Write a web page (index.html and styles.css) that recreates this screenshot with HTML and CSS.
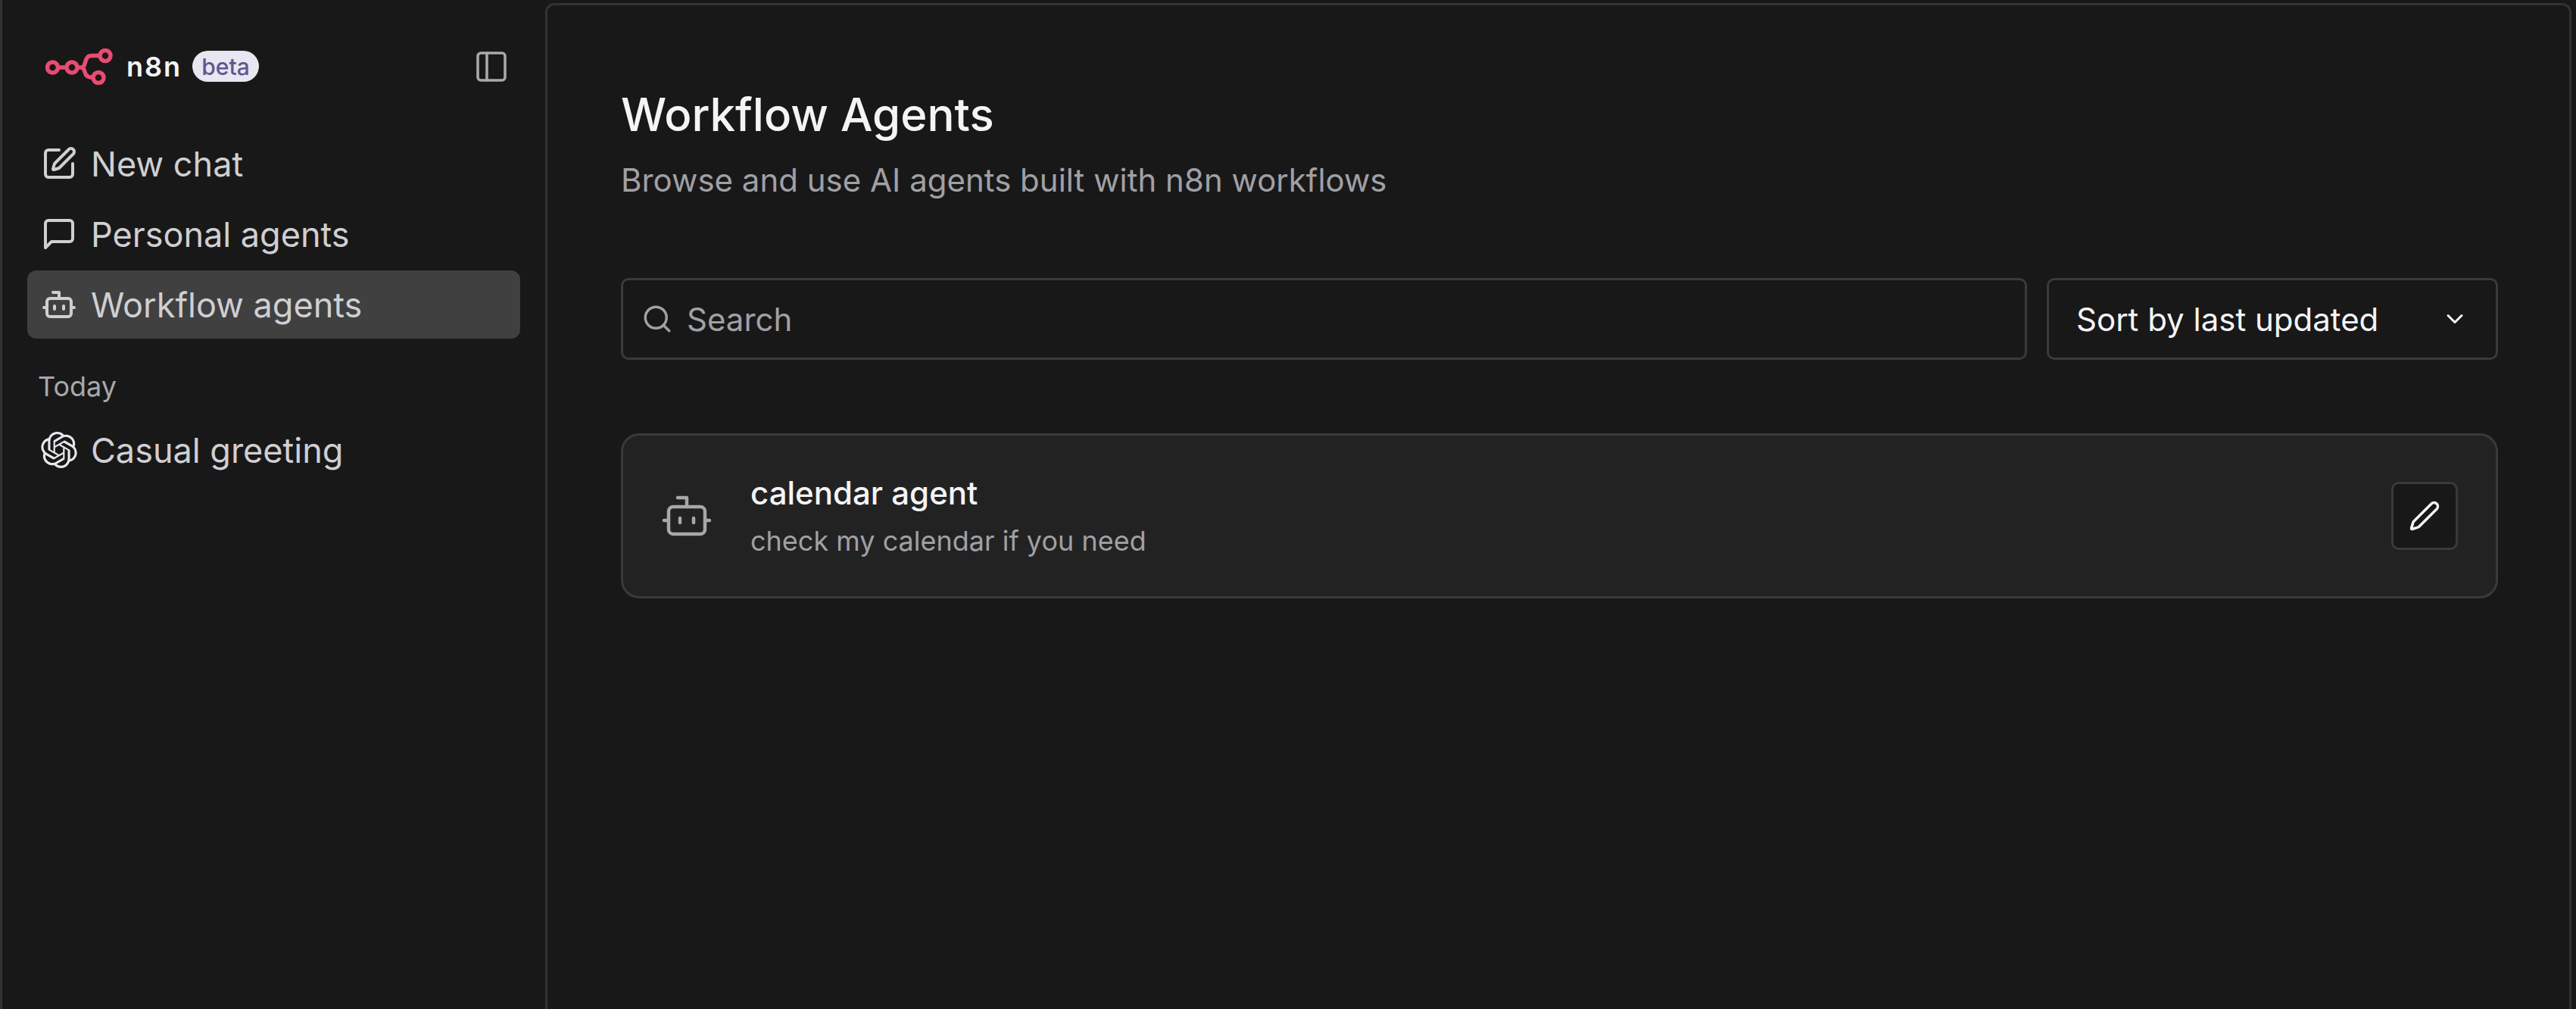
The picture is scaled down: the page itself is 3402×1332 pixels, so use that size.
FILE: index.html
```html
<!DOCTYPE html>
<html lang="en">
<head>
<meta charset="utf-8">
<title>Workflow Agents</title>
<link rel="stylesheet" href="styles.css">
</head>
<body>
<div class="app">
  <aside class="sidebar">
    <div class="brand">
      <div class="logo">
        <svg class="logo-mark" viewBox="0 0 91 48" fill="none" stroke="#ea4b71" stroke-width="5.5">
          <circle cx="9.5" cy="25" r="7"/>
          <circle cx="35" cy="25" r="7"/>
          <circle cx="79" cy="9.5" r="7"/>
          <circle cx="70" cy="38.5" r="7"/>
          <path d="M16.5 25H28M42 25H50M72 9.5H62C54 9.5 54 14 52 20C51 24 50 25 47 25C50 25 51 27 52 31C53 36 56 38.5 63 38.5"/>
        </svg>
        <span class="logo-name">n8n</span>
        <span class="badge">beta</span>
      </div>
      <svg class="panel-icon" viewBox="0 0 24 24" fill="none" stroke="currentColor" stroke-width="1.8" stroke-linecap="round" stroke-linejoin="round">
        <rect x="3" y="3" width="18" height="18" rx="2"/><path d="M9 3v18"/>
      </svg>
    </div>
    <nav class="nav">
      <a class="nav-item">
        <svg class="nav-icon" viewBox="0 0 24 24" fill="none" stroke="currentColor" stroke-width="2" stroke-linecap="round" stroke-linejoin="round">
          <path d="M12 3H5a2 2 0 0 0-2 2v14a2 2 0 0 0 2 2h14a2 2 0 0 0 2-2v-7"/>
          <path d="M18.375 2.625a1 1 0 0 1 3 3l-9.013 9.014a2 2 0 0 1-.853.505l-2.873.84a.5.5 0 0 1-.62-.62l.84-2.873a2 2 0 0 1 .506-.852z"/>
        </svg>
        <span>New chat</span>
      </a>
      <a class="nav-item">
        <svg class="nav-icon" viewBox="0 0 24 24" fill="none" stroke="currentColor" stroke-width="2" stroke-linecap="round" stroke-linejoin="round">
          <path d="M21 15a2 2 0 0 1-2 2H7l-4 4V5a2 2 0 0 1 2-2h14a2 2 0 0 1 2 2z"/>
        </svg>
        <span>Personal agents</span>
      </a>
      <a class="nav-item active">
        <svg class="nav-icon" viewBox="0 0 24 24" fill="none" stroke="currentColor" stroke-width="2" stroke-linecap="round" stroke-linejoin="round">
          <path d="M12 8V4H8"/><rect x="4" y="8" width="16" height="12" rx="2"/><path d="M2 14h2M20 14h2M15 13v2M9 13v2"/>
        </svg>
        <span>Workflow agents</span>
      </a>
    </nav>
    <div class="group-label">Today</div>
    <a class="nav-item">
      <svg class="nav-icon openai" viewBox="0 0 24 24" fill="#e8e8ec">
        <path d="M22.282 9.821a5.985 5.985 0 0 0-.516-4.91 6.046 6.046 0 0 0-6.51-2.9A6.065 6.065 0 0 0 4.981 4.18a5.985 5.985 0 0 0-3.998 2.9 6.046 6.046 0 0 0 .743 7.097 5.98 5.98 0 0 0 .51 4.911 6.051 6.051 0 0 0 6.515 2.9A5.985 5.985 0 0 0 13.26 24a6.056 6.056 0 0 0 5.772-4.206 5.99 5.99 0 0 0 3.997-2.9 6.056 6.056 0 0 0-.747-7.073zM13.26 22.43a4.476 4.476 0 0 1-2.876-1.04l.141-.081 4.779-2.758a.795.795 0 0 0 .392-.681v-6.737l2.02 1.168a.071.071 0 0 1 .038.052v5.583a4.504 4.504 0 0 1-4.494 4.494zM3.6 18.304a4.47 4.47 0 0 1-.535-3.014l.142.085 4.783 2.759a.771.771 0 0 0 .78 0l5.843-3.369v2.332a.08.08 0 0 1-.033.062L9.74 19.95a4.5 4.5 0 0 1-6.14-1.646zM2.34 7.896a4.485 4.485 0 0 1 2.366-1.973V11.6a.766.766 0 0 0 .388.676l5.815 3.355-2.02 1.168a.076.076 0 0 1-.071 0l-4.83-2.786A4.504 4.504 0 0 1 2.34 7.872zm16.597 3.855l-5.833-3.387L15.119 7.2a.076.076 0 0 1 .071 0l4.83 2.791a4.494 4.494 0 0 1-.676 8.105v-5.678a.79.79 0 0 0-.407-.667zm2.01-3.023l-.141-.085-4.774-2.782a.776.776 0 0 0-.785 0L9.409 9.23V6.897a.066.066 0 0 1 .028-.061l4.83-2.787a4.5 4.5 0 0 1 6.68 4.66zm-12.64 4.135l-2.02-1.164a.08.08 0 0 1-.038-.057V6.075a4.5 4.5 0 0 1 7.375-3.453l-.142.08L8.704 5.46a.795.795 0 0 0-.393.681zm1.097-2.365l2.602-1.5 2.607 1.5v2.999l-2.597 1.5-2.607-1.5z"/>
      </svg>
      <span>Casual greeting</span>
    </a>
  </aside>
  <main class="main">
    <h1 class="title">Workflow Agents</h1>
    <p class="subtitle">Browse and use AI agents built with n8n workflows</p>
    <div class="filters">
      <div class="search">
        <svg class="search-icon" viewBox="0 0 24 24" fill="none" stroke="currentColor" stroke-width="2" stroke-linecap="round" stroke-linejoin="round">
          <path d="m21 21-4.34-4.34"/><circle cx="11" cy="11" r="8"/>
        </svg>
        <span>Search</span>
      </div>
      <div class="sort">
        <span>Sort by last updated</span>
        <svg class="chevron" viewBox="0 0 24 24" fill="none" stroke="currentColor" stroke-width="2" stroke-linecap="round" stroke-linejoin="round">
          <path d="m6 9 6 6 6-6"/>
        </svg>
      </div>
    </div>
    <article class="card">
      <svg class="card-icon" viewBox="0 0 24 24" fill="none" stroke="currentColor" stroke-width="1.5" stroke-linecap="round" stroke-linejoin="round">
        <path d="M12 8V4H8"/><rect x="4" y="8" width="16" height="12" rx="2"/><path d="M2 14h2M20 14h2M15 13v2M9 13v2"/>
      </svg>
      <div class="card-body">
        <div class="card-title">calendar agent</div>
        <div class="card-desc">check my calendar if you need</div>
      </div>
      <button class="edit" type="button" aria-label="Edit">
        <svg class="edit-icon" viewBox="0 0 24 24" fill="none" stroke="currentColor" stroke-width="2" stroke-linecap="round" stroke-linejoin="round">
          <path d="M21.174 6.812a1 1 0 0 0-3.986-3.987L3.842 16.174a2 2 0 0 0-.5.83l-1.321 4.352a.5.5 0 0 0 .623.622l4.353-1.32a2 2 0 0 0 .83-.497z"/>
        </svg>
      </button>
    </article>
  </main>
</div>
</body>
</html>
```
FILE: styles.css
```css
* { box-sizing: border-box; }
html, body { margin: 0; height: 100%; }
body {
  background: #181818;
  color: #f4f4f6;
  font-family: Inter, "Liberation Sans", sans-serif;
  overflow: hidden;
}
.app {
  display: flex;
  height: 1332px;
  padding-top: 4px;
  border-left: 3px solid #333;
}
.sidebar {
  width: 717px;
  flex: none;
  padding: 0 33px;
  color: #cfcfd3;
}
.brand {
  display: flex;
  align-items: center;
  justify-content: space-between;
  padding: 60px 14px 0 24px;
  height: 107px;
}
.logo { display: flex; align-items: center; }
.logo-mark { width: 91px; height: 48px; display: block; }
.logo-name {
  margin-left: 16px;
  font-size: 36px;
  font-weight: 600;
  letter-spacing: 2px;
  color: #f4f4f6;
}
.badge {
  margin-left: 14px;
  width: 88px;
  height: 41px;
  border-radius: 21px;
  background: #e8e6f0;
  color: #5f5790;
  font-size: 30px;
  font-weight: 500;
  display: flex;
  align-items: center;
  justify-content: center;
}
.panel-icon { width: 48px; height: 48px; color: #a8a8ac; flex: none; }
.nav { display: flex; flex-direction: column; gap: 3px; margin-top: 60px; }
.nav-item {
  display: flex;
  align-items: center;
  gap: 18px;
  height: 90px;
  padding: 0 18px;
  border-radius: 12px;
  font-size: 45px;
  color: #cfcfd3;
}
.nav-item.active { background: #404040; }
.nav-icon { width: 48px; height: 48px; flex: none; }
.group-label {
  margin-top: 36px;
  padding-left: 14px;
  font-size: 36px;
  line-height: 54px;
  color: #a8a8ac;
}
.group-label + .nav-item { margin-top: 12px; }
.main {
  flex: 1;
  margin-right: 6px;
  border: 3px solid #333;
  border-bottom: 0;
  border-radius: 12px 12px 0 0;
  padding: 0 94px 0 97px;
}
.title {
  margin: 108px 0 0;
  font-size: 60px;
  line-height: 72px;
  font-weight: 500;
  color: #f4f4f6;
}
.subtitle {
  margin: 21px 0 0;
  font-size: 42px;
  line-height: 60px;
  color: #a0a0a5;
}
.filters { display: flex; gap: 26px; margin-top: 99px; }
.search, .sort {
  height: 108px;
  border: 3px solid #3a3a3a;
  border-radius: 10px;
  display: flex;
  align-items: center;
  font-size: 42px;
}
.search { flex: 1; padding: 0 24px; gap: 18px; color: #a0a0a5; }
.search-icon { width: 42px; height: 42px; flex: none; }
.sort {
  width: 596px;
  flex: none;
  padding: 0 36px;
  justify-content: space-between;
  color: #f4f4f6;
}
.chevron { width: 36px; height: 36px; flex: none; }
.card {
  margin-top: 97px;
  height: 218px;
  background: #222;
  border: 3px solid #3a3a3a;
  border-radius: 24px;
  display: flex;
  align-items: center;
  padding: 0 50px 0 48px;
}
.card-icon { width: 72px; height: 72px; flex: none; color: #a8a8ac; }
.card-body { flex: 1; margin-left: 48px; }
.card-title { font-size: 42px; line-height: 60px; font-weight: 500; color: #f4f4f6; }
.card-desc { margin-top: 6px; font-size: 36px; line-height: 54px; color: #a0a0a5; }
.edit {
  width: 88px;
  height: 90px;
  padding: 0;
  border: 3px solid #3a3a3a;
  border-radius: 10px;
  background: #181818;
  color: #f4f4f6;
  display: flex;
  align-items: center;
  justify-content: center;
}
.edit-icon { width: 42px; height: 42px; }
```
